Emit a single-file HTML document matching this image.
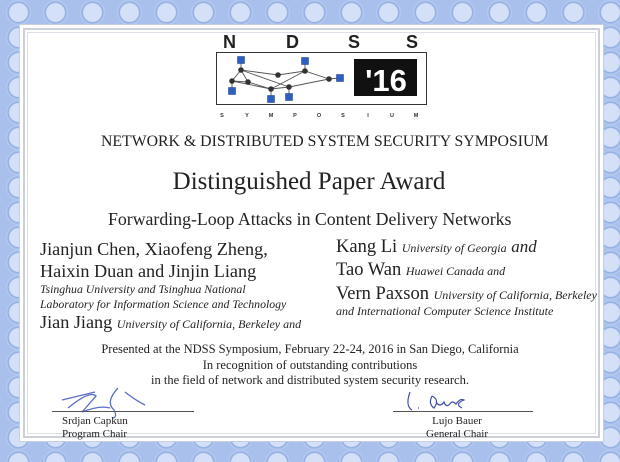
<!DOCTYPE html>
<html><head><meta charset="utf-8"><style>
*{margin:0;padding:0;box-sizing:border-box}
body{width:620px;height:462px;overflow:hidden;position:relative;background:#a9c0ec;font-family:"Liberation Serif",serif;color:#222}
.bd{position:absolute;inset:0;background:
radial-gradient(circle at 50% 50%,#d4e0f7 0 9px,#8eabe0 10px,#b7cbf0 12px,transparent 13px) 0 0/37px 25px,#a9c0ec}
.in{position:absolute;left:19px;top:24px;width:585px;height:418px;background:#fff;border:1px solid #c8cfdc}
.fr{position:absolute;left:23px;top:28px;width:577px;height:410px;border:2px solid #ccd0d8;outline:1px solid #dde0e6;outline-offset:-5px}
.t{position:absolute;white-space:nowrap}
.c{left:0;width:620px;text-align:center}
i{font-size:12px}
</style></head><body>
<div class="bd"></div>
<div class="in"></div><div class="fr"></div>
<svg class="t" style="left:0;top:0" width="620" height="125">
<g font-family="Liberation Sans" font-weight="bold" font-size="18" fill="#222"><text x="223" y="48">N</text><text x="286" y="48">D</text><text x="348" y="48">S</text><text x="406" y="48">S</text></g>
<rect x="216.5" y="52.5" width="210" height="52" fill="none" stroke="#333" stroke-width="1"/>
<rect x="354" y="59" width="63" height="37" fill="#111"/>
<text x="386" y="91" font-family="Liberation Sans" font-weight="bold" font-size="31" fill="#fff" text-anchor="middle">'16</text>
<g stroke="#555" stroke-width="0.9" fill="none">
<polyline points="232,81 241,70 278,75 305,71 329,79 340,78"/>
<polyline points="241,70 248,82 271,89 289,87 329,79"/>
<polyline points="232,81 248,82"/><polyline points="232,81 271,89"/>
<polyline points="241,70 289,87"/><polyline points="271,89 305,71"/>
<line x1="241" y1="60" x2="241" y2="70"/><line x1="305" y1="61" x2="305" y2="71"/><line x1="232" y1="81" x2="232" y2="91"/><line x1="271" y1="89" x2="271" y2="99"/><line x1="289" y1="87" x2="289" y2="97"/>
</g>
<g fill="#333"><circle cx="241" cy="70" r="2.8"/><circle cx="232" cy="81" r="2.8"/><circle cx="248" cy="82" r="2.8"/><circle cx="278" cy="75" r="2.8"/><circle cx="305" cy="71" r="2.8"/><circle cx="329" cy="79" r="2.8"/><circle cx="271" cy="89" r="2.8"/><circle cx="289" cy="87" r="2.8"/></g>
<g fill="#2d5fc4" stroke="#1a3a80" stroke-width=".5"><rect x="237.5" y="56.5" width="7" height="7"/><rect x="301.5" y="57.5" width="7" height="7"/><rect x="336.5" y="74.5" width="7" height="7"/><rect x="228.5" y="87.5" width="7" height="7"/><rect x="267.5" y="95.5" width="7" height="7"/><rect x="285.5" y="93.5" width="7" height="7"/></g>
<g font-family="Liberation Sans" font-weight="bold" font-size="5.5" fill="#333" text-anchor="middle"><text x="222" y="117">S</text><text x="247" y="117">Y</text><text x="271" y="117">M</text><text x="295" y="117">P</text><text x="319" y="117">O</text><text x="343" y="117">S</text><text x="368" y="117">I</text><text x="392" y="117">U</text><text x="416" y="117">M</text></g>
</svg>
<div class="t" style="left:101px;top:133px;font-size:15.8px">NETWORK &amp; DISTRIBUTED SYSTEM SECURITY SYMPOSIUM</div>
<div class="t c" style="top:168px;font-size:25px;left:-1px">Distinguished Paper Award</div>
<div class="t" style="left:108px;top:209px;font-size:17.8px">Forwarding-Loop Attacks in Content Delivery Networks</div>
<div class="t" style="left:40px;top:238px;font-size:18.2px;line-height:22px">Jianjun Chen, Xiaofeng Zheng,<br>Haixin Duan and Jinjin Liang</div>
<div class="t" style="left:40px;top:282px;font-size:11.8px;line-height:15px;font-style:italic">Tsinghua University and Tsinghua National<br>Laboratory for Information Science and Technology</div>
<div class="t" style="left:40px;top:312px;font-size:18.2px">Jian Jiang <i>University of California, Berkeley and</i></div>
<div class="t" style="left:336px;top:237px;font-size:18.5px">Kang Li <i>University of Georgia</i> <i style="font-size:17px">and</i></div>
<div class="t" style="left:336px;top:260px;font-size:18.5px">Tao Wan <i>Huawei Canada and</i></div>
<div class="t" style="left:336px;top:284px;font-size:18.5px">Vern Paxson <i>University of California, Berkeley</i></div>
<div class="t" style="left:336px;top:304px;font-size:12px;font-style:italic">and International Computer Science Institute</div>
<div class="t c" style="top:342px;font-size:12.5px;line-height:15.5px">Presented at the NDSS Symposium, February 22-24, 2016 in San Diego, California<br>In recognition of outstanding contributions<br>in the field of network and distributed system security research.</div>
<svg class="t" style="left:0;top:380px" width="620" height="40">
<path d="M62 20 L95 12 M68 28 Q90 10 96 16 L82 32 Q100 25 110 28 M118 8 Q105 22 114 30 Q118 38 112 38 M125 12 Q135 20 145 25" stroke="#5b6fc4" fill="none" stroke-width="1.3"/>
<path d="M410 12 Q405 26 412 30 M418 28 h1 M432 16 Q428 24 434 28 Q440 20 432 16 M436 22 q4 6 8 0 q2 6 6 2 q2-4 6 0 q4-6 8 -4 q-10 4 -2 8" stroke="#4050a8" fill="none" stroke-width="1.2"/>
</svg>
<div style="position:absolute;left:52px;top:411px;width:142px;border-top:1px solid #555"></div>
<div style="position:absolute;left:393px;top:411px;width:140px;border-top:1px solid #555"></div>
<div class="t" style="left:62px;top:415px;font-size:11px;line-height:13px">Srdjan Capkun<br>Program Chair</div>
<div class="t" style="left:426px;top:415px;font-size:11px;line-height:13px;text-align:center">Lujo Bauer<br>General Chair</div>
</body></html>
